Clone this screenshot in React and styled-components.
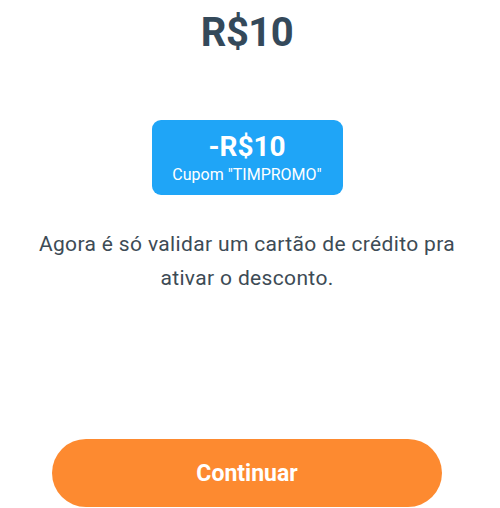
import React from 'react'
import styled, { createGlobalStyle } from 'styled-components'

const GlobalStyle = createGlobalStyle`
    html, body {
        margin: 0;
        padding: 0;
        background: #ffffff;
    }
    body {
        font-family: Roboto, "Liberation Sans", sans-serif;
        -webkit-font-smoothing: antialiased;
    }
`;

const Screen = styled.main`
    width: 500px;
    height: 508px;
    display: flex;
    flex-direction: column;
    align-items: center;
    box-sizing: border-box;
    padding: 8px 6px 0 0;
    overflow: hidden;
`;

const Price = styled.h1`
    margin: 0;
    font-size: 40px;
    line-height: 50px;
    font-weight: 700;
    color: #34495a;
    letter-spacing: -0.5px;
`;

const Coupon = styled.div`
    margin-top: 62px;
    width: 191px;
    height: 75px;
    box-sizing: border-box;
    padding-top: 2px;
    background: #1fa5f7;
    border-radius: 9px;
    display: flex;
    flex-direction: column;
    align-items: center;
    justify-content: center;
    color: #ffffff;
`;

const Discount = styled.span`
    font-size: 28px;
    line-height: 30px;
    font-weight: 700;
`;

const Code = styled.span`
    margin-top: 3px;
    font-size: 16px;
    line-height: 20px;
    font-weight: 400;
`;

const Message = styled.p`
    margin: 32px 0 0;
    width: 450px;
    text-align: center;
    font-size: 21px;
    line-height: 34px;
    color: #3d4b55;
    letter-spacing: 0.35px;
`;

const Spacer = styled.div`
    flex: 1;
`;

const ContinueButton = styled.button`
    width: 390px;
    height: 68px;
    margin-bottom: 1px;
    border: none;
    border-radius: 34px;
    background: #fd8a30;
    color: #ffffff;
    font-family: Roboto, "Liberation Sans", sans-serif;
    font-size: 23px;
    font-weight: 700;
    cursor: pointer;
`;

export default function App() {
    return (
        <>
            <GlobalStyle />
            <Screen>
                <Price>R$10</Price>
                <Coupon>
                    <Discount>-R$10</Discount>
                    <Code>Cupom "TIMPROMO"</Code>
                </Coupon>
                <Message>
                    Agora é só validar um cartão de crédito pra ativar o desconto.
                </Message>
                <Spacer />
                <ContinueButton>Continuar</ContinueButton>
            </Screen>
        </>
    )
}
